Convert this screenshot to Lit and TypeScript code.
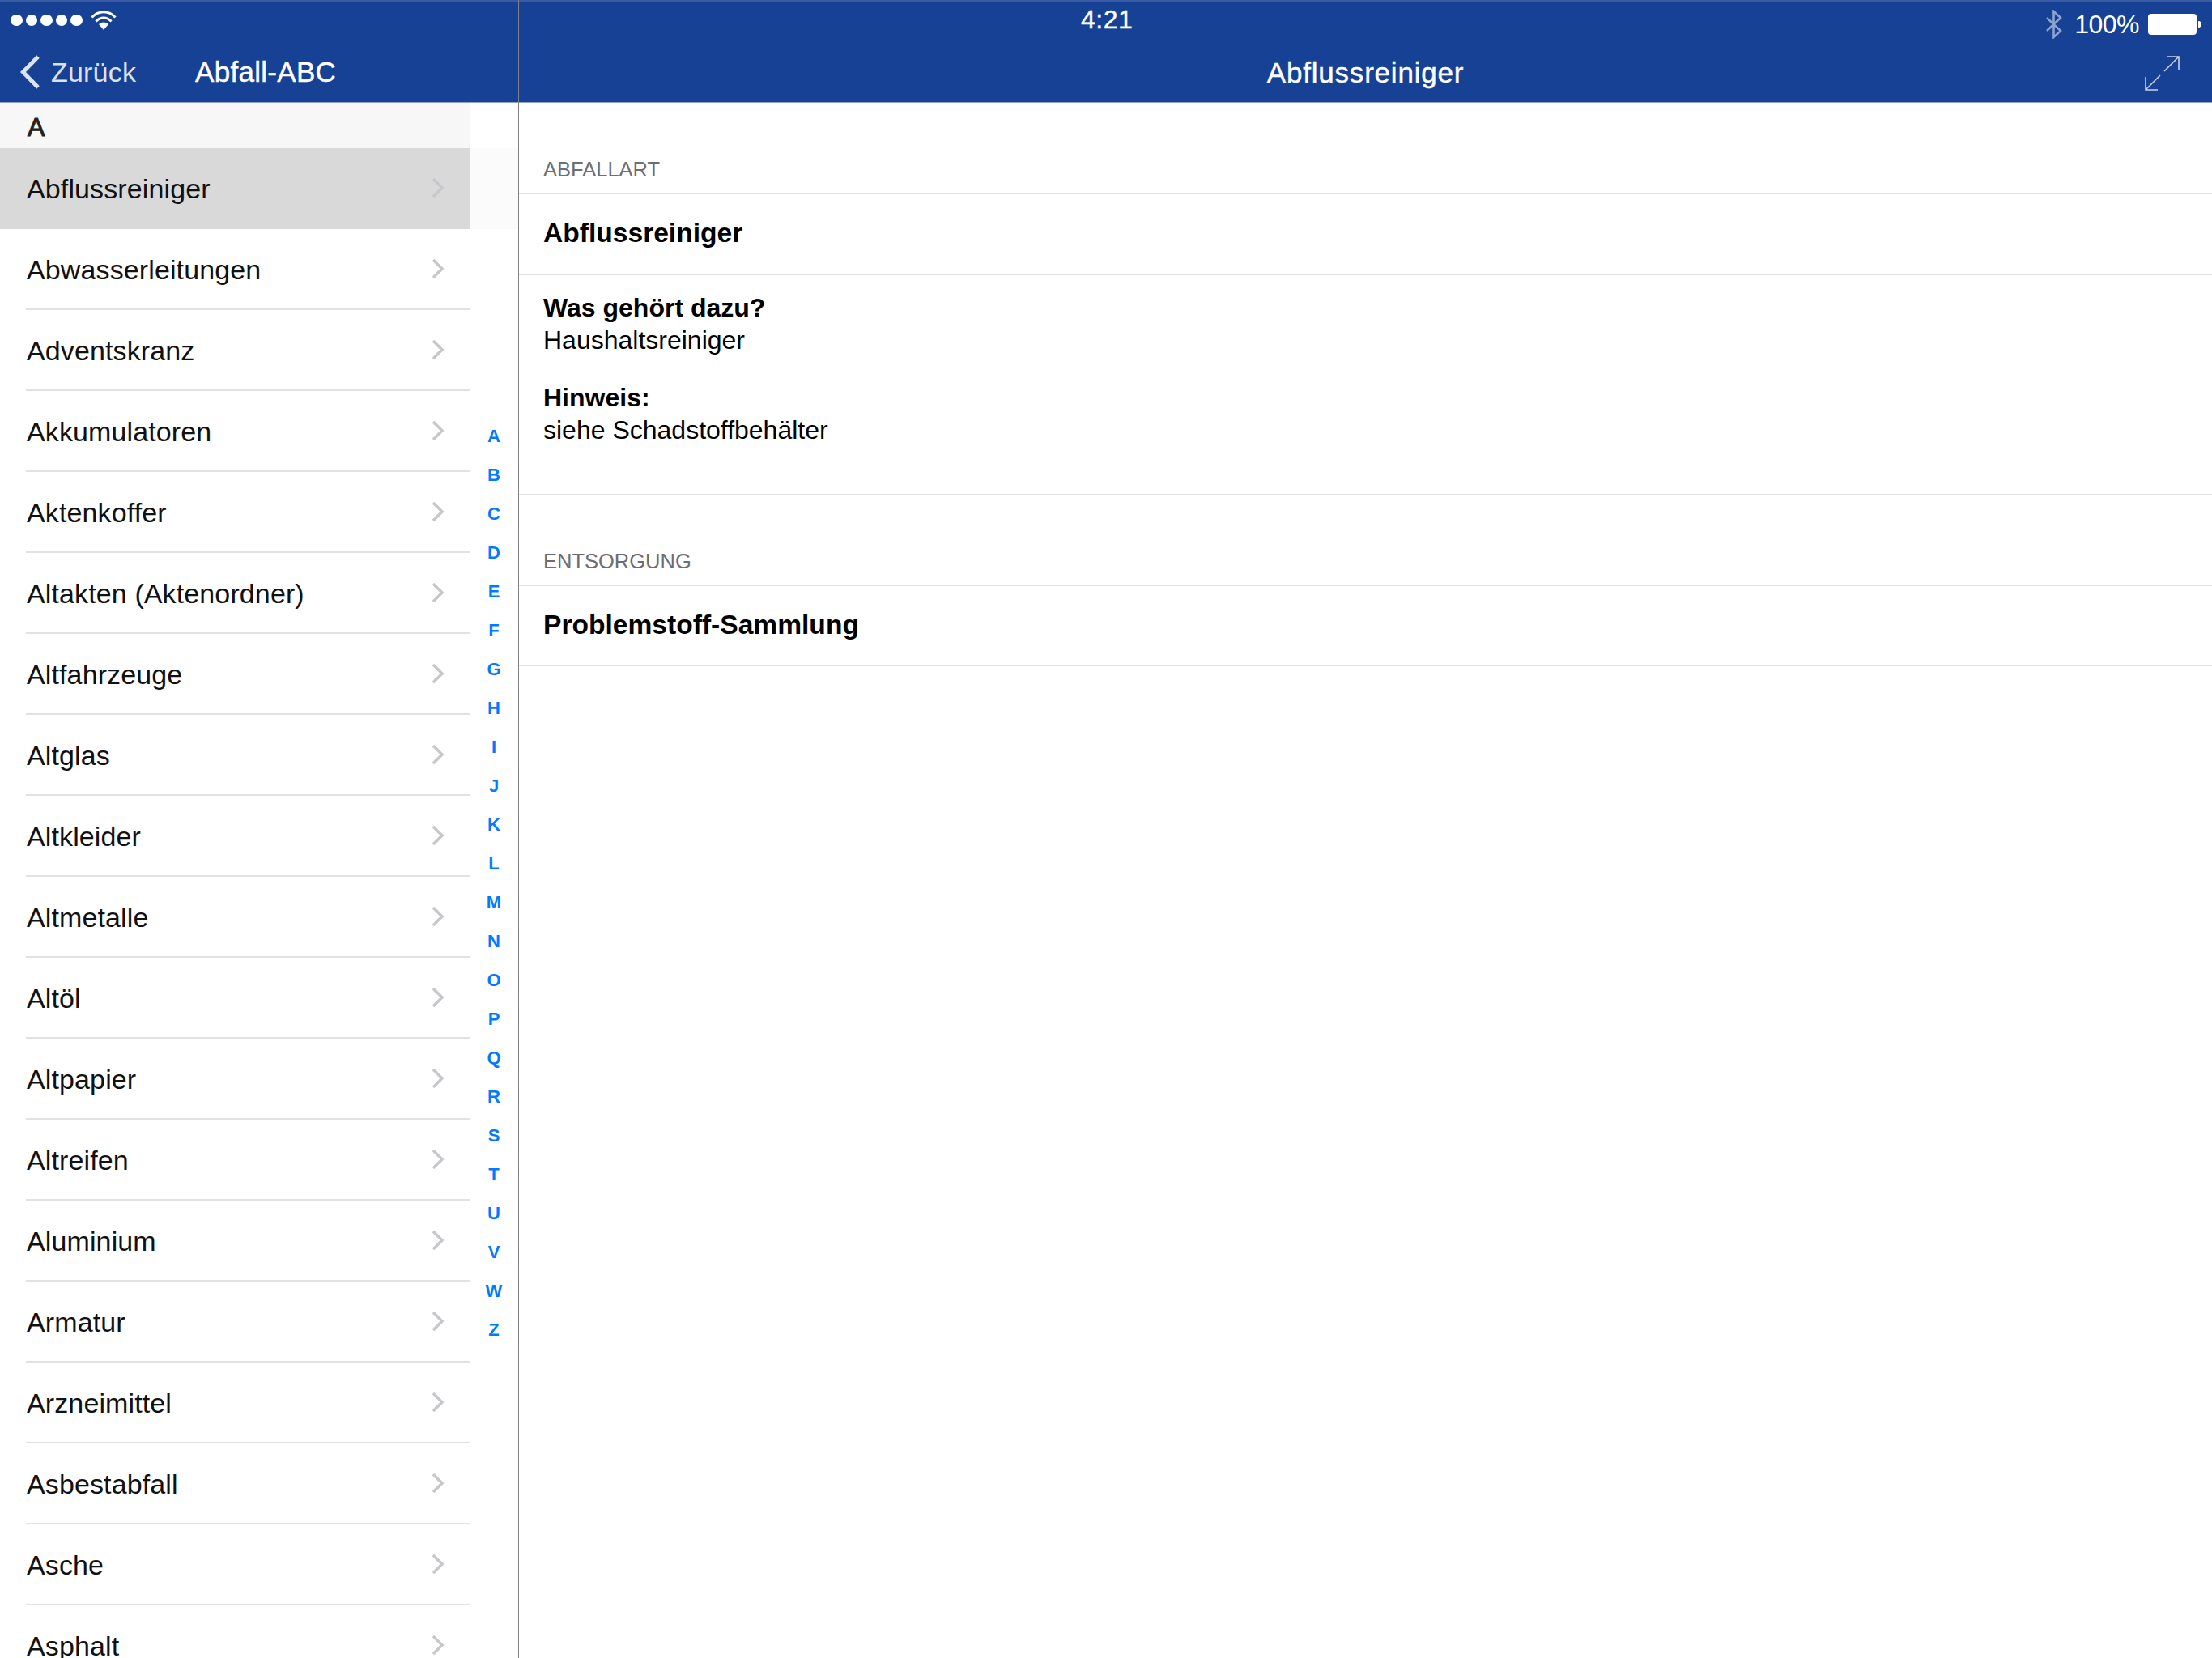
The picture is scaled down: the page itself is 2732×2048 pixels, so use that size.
import { LitElement, html, css, svg } from "lit";
import { customElement } from "lit/decorators.js";

const ITEMS = [
  "Abflussreiniger",
  "Abwasserleitungen",
  "Adventskranz",
  "Akkumulatoren",
  "Aktenkoffer",
  "Altakten (Aktenordner)",
  "Altfahrzeuge",
  "Altglas",
  "Altkleider",
  "Altmetalle",
  "Altöl",
  "Altpapier",
  "Altreifen",
  "Aluminium",
  "Armatur",
  "Arzneimittel",
  "Asbestabfall",
  "Asche",
  "Asphalt",
];

const LETTERS = "ABCDEFGHIJKLMNOPQRSTUVWZ".split("");

const chevron = svg`<path d="M2 2L13 13L2 24" fill="none" stroke="#c7c7cc" stroke-width="3.6"/>`;

@customElement("app-root")
export class AppRoot extends LitElement {
  static styles = css`
    :host {
      display: block;
      width: 2732px;
      height: 2048px;
      overflow: hidden;
      background: #fff;
      font-family: "Liberation Sans", Arial, sans-serif;
      color: #000;
    }
    .page {
      display: flex;
      height: 2048px;
    }

    /* left column */
    .side {
      width: 640px;
      flex: none;
      display: flex;
      flex-direction: column;
    }
    .bar {
      height: 127px;
      flex: none;
      box-sizing: border-box;
      background: #174195;
      border-top: 2px solid #3a5ba4;
      border-bottom: 1px solid #8fa3cc;
      color: #fff;
    }
    .status-left {
      height: 46px;
      display: flex;
      align-items: center;
      padding-left: 13px;
      gap: 10px;
    }
    .dots {
      display: flex;
      gap: 4px;
    }
    .dots span {
      width: 14.5px;
      height: 14.5px;
      border-radius: 50%;
      background: #fff;
    }
    .nav-left {
      display: flex;
      align-items: center;
      height: 78px;
      box-sizing: border-box;
      padding: 4px 0 0 25px;
    }
    .back {
      font-size: 34px;
      letter-spacing: 0.2px;
      color: #dbe2f0;
      margin-left: 14px;
      width: 178px;
    }
    .nav-title {
      font-size: 35px;
      letter-spacing: 0.3px;
      -webkit-text-stroke: 0.4px #fff;
    }
    .side-body {
      flex: 1;
      display: flex;
      min-height: 0;
    }
    .list {
      width: 580px;
      flex: none;
    }
    .letter {
      height: 56px;
      box-sizing: border-box;
      background: #f7f7f7;
      display: flex;
      align-items: center;
      padding: 4px 0 0 34px;
      font-size: 32px;
      color: #222;
      -webkit-text-stroke: 1px #222;
    }
    .row {
      height: 100px;
      box-sizing: border-box;
      padding-left: 33px;
    }
    .row.selected {
      background: #d9d9d9;
      box-shadow: 60px 0 0 #fbfbfb;
    }
    .row-inner {
      height: 100%;
      box-sizing: border-box;
      display: flex;
      align-items: center;
      justify-content: space-between;
      padding-right: 31px;
      border-bottom: 2px solid #e2e2e2;
      margin-left: -1px;
      font-size: 34px;
      color: #111;
    }
    .row-inner span {
      padding: 2px 0 0 1px;
      letter-spacing: 0.12px;
    }
    .row.selected .row-inner {
      border-bottom-color: transparent;
    }
    .row-inner svg {
      width: 16px;
      height: 26px;
      flex: none;
    }
    .index {
      flex: 1;
      display: flex;
      flex-direction: column;
      align-items: center;
      justify-content: center;
      padding-top: 7px;
      font-size: 22px;
      font-weight: bold;
      color: #007aff;
    }
    .index span {
      height: 48px;
      line-height: 48px;
    }

    /* right column */
    .detail {
      flex: 1;
      display: flex;
      flex-direction: column;
      border-left: 1px solid #808085;
    }
    .status-right {
      height: 46px;
      display: flex;
      align-items: flex-start;
      padding-left: 694px;
      padding-right: 13px;
      font-size: 32px;
    }
    .clock {
      line-height: 45px;
      letter-spacing: 0.5px;
      -webkit-text-stroke: 0.4px #fff;
    }
    .status-icons {
      margin: 10px 0 0 auto;
      height: 36px;
      display: flex;
      align-items: center;
    }
    .percent {
      margin-left: 15px;
      margin-right: 11px;
      letter-spacing: -0.5px;
    }
    .nav-right {
      height: 78px;
      box-sizing: border-box;
      padding: 6px 40px 0 0;
      display: flex;
      align-items: center;
    }
    .nav-right .nav-title {
      flex: 1;
      text-align: center;
      padding-left: 83px;
      letter-spacing: 0.8px;
    }
    .label {
      box-sizing: border-box;
      padding: 0 0 14px 30px;
      display: flex;
      align-items: flex-end;
      font-size: 25.5px;
      color: #6d6d72;
    }
    .label.first {
      height: 111px;
    }
    .label.second {
      height: 110px;
    }
    .cell {
      border-top: 2px solid #e2e2e2;
      padding-left: 30px;
    }
    .cell.head {
      height: 98px;
      display: flex;
      align-items: center;
      font-size: 33.6px;
      font-weight: bold;
    }
    .cell.head span {
      padding-bottom: 3px;
    }
    .cell.head.short {
      height: 97px;
    }
    .cell.head.short span {
      padding-bottom: 1px;
    }
    .cell.info {
      height: 272px;
      box-sizing: border-box;
      padding-top: 20px;
      font-size: 32px;
      line-height: 40px;
    }
    .cell.end {
      height: 0;
    }
    .info p {
      margin: 0 0 31px;
    }
    .info b {
      display: block;
    }
  `;

  render() {
    return html`
      <div class="page">
        <div class="side">
          <div class="bar">
            <div class="status-left">
              <div class="dots">
                <span></span><span></span><span></span><span></span><span></span>
              </div>
              <svg width="32" height="24" viewBox="0 0 32 24">
                <path d="M1.5 8.5C9.5 -0.5 22.500 -0.5 30.500 8.500" fill="none" stroke="#fff" stroke-width="3"/>
                <path d="M6.500 13.500C12 7.500 20 7.500 25.500 13.500" fill="none" stroke="#fff" stroke-width="3"/>
                <path d="M10 17L16 24L22 17C18.500 13.500 13.500 13.500 10 17Z" fill="#fff"/>
              </svg>
            </div>
            <div class="nav-left">
              <svg width="24" height="42" viewBox="0 0 24 42">
                <path d="M22 2L3.500 21L22 40" fill="none" stroke="#dbe2f0" stroke-width="5"/>
              </svg>
              <span class="back">Zurück</span>
              <span class="nav-title">Abfall-ABC</span>
            </div>
          </div>
          <div class="side-body">
            <div class="list">
              <div class="letter">A</div>
              ${ITEMS.map(
                (name, i) => html`
                  <div class="row ${i === 0 ? "selected" : ""}">
                    <div class="row-inner">
                      <span>${name}</span>
                      <svg viewBox="0 0 16 26">${chevron}</svg>
                    </div>
                  </div>
                `
              )}
            </div>
            <div class="index">
              ${LETTERS.map((l) => html`<span>${l}</span>`)}
            </div>
          </div>
        </div>

        <div class="detail">
          <div class="bar">
            <div class="status-right">
              <span class="clock">4:21</span>
              <div class="status-icons">
                <svg width="20" height="36" viewBox="0 0 20 36">
                  <path d="M1 10L18 26L9.500 34V2L18 10L1 26" fill="none" stroke="#8ea3cf" stroke-width="2.600"/>
                </svg>
                <span class="percent">100%</span>
                <svg width="66" height="26" viewBox="0 0 66 26">
                  <rect x="0" y="0" width="60" height="26" rx="4" fill="#fff"/>
                  <path d="M62 9C65 9 66 11 66 13C66 15 65 17 62 17Z" fill="#fff"/>
                </svg>
              </div>
            </div>
            <div class="nav-right">
              <span class="nav-title">Abflussreiniger</span>
              <svg width="43" height="43" viewBox="0 0 43 43">
                <path d="M24 19L42 1M27 1H42V17M19 24L1 42M1 26V42H16" fill="none" stroke="#c9d3e8" stroke-width="1.600"/>
              </svg>
            </div>
          </div>
          <div class="label first">ABFALLART</div>
          <div class="cell head"><span>Abflussreiniger</span></div>
          <div class="cell info">
            <p><b>Was gehört dazu?</b>Haushaltsreiniger</p>
            <p><b>Hinweis:</b>siehe Schadstoffbehälter</p>
          </div>
          <div class="cell end"></div>
          <div class="label second">ENTSORGUNG</div>
          <div class="cell head short"><span>Problemstoff-Sammlung</span></div>
          <div class="cell end"></div>
        </div>
      </div>
    `;
  }
}
